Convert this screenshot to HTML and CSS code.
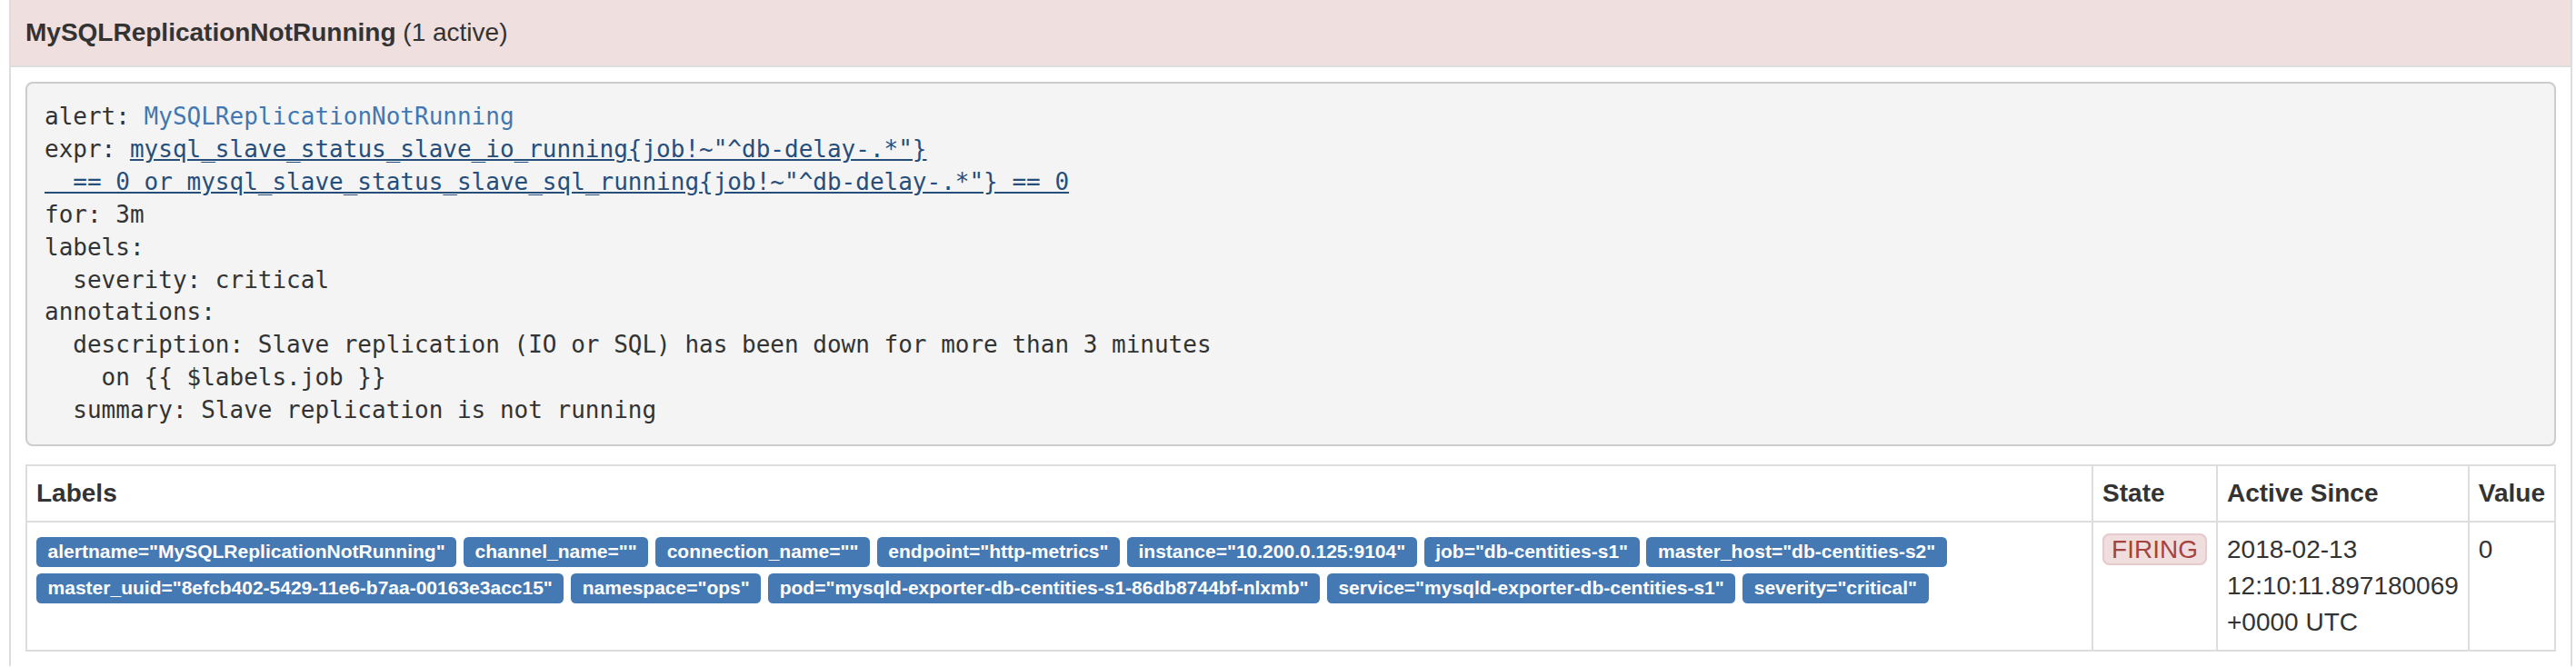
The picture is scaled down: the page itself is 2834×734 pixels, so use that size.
FILE: index.html
```html
<!DOCTYPE html>
<html>
<head>
<meta charset="utf-8">
<title>Alerts</title>
<link rel="stylesheet" href="styles.css">
</head>
<body>
<div class="page">
  <div class="rule">
    <div class="rule-head"><strong>MySQLReplicationNotRunning</strong> (1 active)</div>
    <div class="rule-body">
<pre class="snippet"><code>alert: <a class="alert-link" href="#">MySQLReplicationNotRunning</a>
expr: <a class="expr-link" href="#">mysql_slave_status_slave_io_running{job!~"^db-delay-.*"}
  == 0 or mysql_slave_status_slave_sql_running{job!~"^db-delay-.*"} == 0</a>
for: 3m
labels:
  severity: critical
annotations:
  description: Slave replication (IO or SQL) has been down for more than 3 minutes
    on {{ $labels.job }}
  summary: Slave replication is not running</code></pre>
      <table class="alerts">
        <tr>
          <th>Labels</th>
          <th class="shrink">State</th>
          <th class="shrink">Active Since</th>
          <th class="shrink">Value</th>
        </tr>
        <tr>
          <td><span class="label">alertname="MySQLReplicationNotRunning"</span> <span class="label">channel_name=""</span> <span class="label">connection_name=""</span> <span class="label">endpoint="http-metrics"</span> <span class="label">instance="10.200.0.125:9104"</span> <span class="label">job="db-centities-s1"</span> <span class="label">master_host="db-centities-s2"</span> <span class="label">master_uuid="8efcb402-5429-11e6-b7aa-00163e3acc15"</span> <span class="label">namespace="ops"</span> <span class="label">pod="mysqld-exporter-db-centities-s1-86db8744bf-nlxmb"</span> <span class="label">service="mysqld-exporter-db-centities-s1"</span> <span class="label">severity="critical"</span> </td>
          <td><span class="state-firing">FIRING</span></td>
          <td>2018-02-13 12:10:11.897180069 +0000 UTC</td>
          <td>0</td>
        </tr>
      </table>
    </div>
  </div>
</div>
</body>
</html>
```
FILE: styles.css
```css
* {
  box-sizing: border-box;
}

html,
body {
  margin: 0;
  background: #fff;
}

body {
  font-family: "Liberation Sans", Arial, Helvetica, sans-serif;
  font-size: 28px;
  line-height: 40px;
  color: #333;
}

.page {
  padding: 0 4px 0 10px;
}

.rule {
  border-left: 2px solid #ddd;
  border-right: 2px solid #ddd;
}

.rule-head {
  background: #efdfdf;
  padding: 16px;
  border-bottom: 2px solid #ddd;
}

.rule-body {
  padding: 16px;
}

.snippet {
  margin: 0 0 20px;
  padding: 19px;
  border: 2px solid #ccc;
  border-radius: 8px;
  background: #f4f4f4;
  font-family: "DejaVu Sans Mono", "Liberation Mono", monospace;
  font-size: 26px;
  line-height: 35.9px;
  color: #333;
  white-space: pre;
  overflow: hidden;
}

.snippet code {
  font-family: inherit;
}

.alert-link {
  color: #4178b2;
  text-decoration: none;
}

.expr-link {
  color: #264e7b;
  text-decoration: underline;
}

.alerts {
  width: 100%;
  border-collapse: collapse;
  border: 2px solid #ddd;
}

.alerts th,
.alerts td {
  border: 2px solid #ddd;
  padding: 10px;
  text-align: left;
  vertical-align: top;
}

.alerts th {
  vertical-align: bottom;
  font-weight: 700;
}

.shrink {
  width: 1%;
}

.label {
  display: inline;
  padding: 4.2px 12.6px 6.3px;
  font-size: 21px;
  font-weight: 700;
  line-height: 1;
  color: #fff;
  white-space: nowrap;
  border-radius: 5.25px;
  background: #4579b3;
}

.state-firing {
  display: inline;
  padding: 0 8px;
  border: 2px solid #e6cacd;
  border-radius: 8px;
  background: #f0dede;
  color: #a5443f;
}
```
